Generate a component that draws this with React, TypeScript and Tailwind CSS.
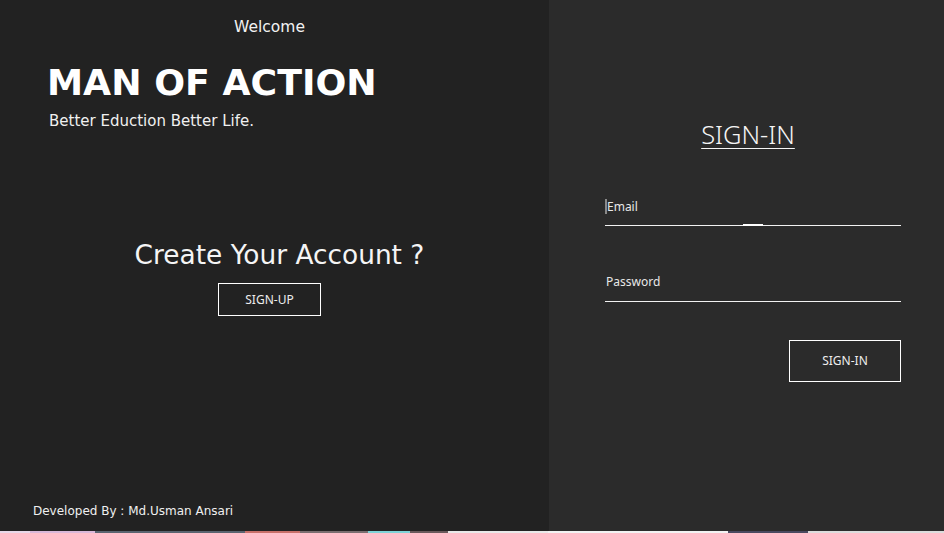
export default function App() {
  return (
    <div className="flex h-[533px] w-[944px] flex-col overflow-hidden bg-[#222222]">
      <div className="flex h-[531px] w-full">
        {/* left side */}
        <div className="relative flex w-[549px] flex-col bg-[#222222] font-['DejaVu_Sans',sans-serif] text-white">
          <p className="pt-[16px] pr-[10px] text-center text-[15.5px] leading-[22px] text-[#f2f2f2]">Welcome</p>
          <h1 className="mt-[23px] pl-[47px] text-[36.3px] font-bold leading-[44px]">MAN OF ACTION</h1>
          <p className="mt-[6px] pl-[49px] text-[15px] leading-[20px] text-[#f0f0f0]">Better Eduction Better Life.</p>

          <div className="mt-[108px] flex flex-col items-center pl-[10px]">
            <h2 className="text-[26.4px] leading-[32px] text-[#f5f5f5]">Create Your Account ?</h2>
            <button className="mt-[12px] mr-[20px] h-[33px] w-[103px] border border-white font-['Noto_Sans',sans-serif] text-[12px] text-[#eeeeee]">
              SIGN-UP
            </button>
          </div>

          <p className="mt-auto pb-[12px] pl-[33px] text-[12px] leading-[16px] text-[#f0f0f0]">
            Developed By : Md.Usman Ansari
          </p>
        </div>

        {/* right side */}
        <div className="flex flex-1 flex-col bg-[#2b2b2b] pl-[56px] pr-[43px] font-['Noto_Sans',sans-serif] text-white">
          <div className="mt-[117px] mr-[10px] flex justify-center">
            <h2 className="text-[25.5px] font-light leading-[34px] text-[#f5f5f5] underline decoration-1 underline-offset-[4px]">SIGN-IN</h2>
          </div>

          <div className="relative mt-[47px] flex h-[28px] items-start border-b border-[#f2f2f2]">
            <span className="mt-[1px] h-[15px] w-[2px] bg-[#8a8a8a]" />
            <span className="text-[12px] leading-[17px] text-[#e8e8e8]">Email</span>
            <span className="absolute bottom-[-1px] left-[138px] h-[2px] w-[20px] bg-white" />
          </div>

          <div className="mt-[47px] flex h-[29px] items-start border-b border-[#f2f2f2] pl-[1px]">
            <span className="text-[12px] leading-[17px] text-[#e8e8e8]">Password</span>
          </div>

          <div className="mt-[38px] flex justify-end">
            <button className="h-[42px] w-[112px] border border-white text-[12px] text-[#eeeeee]">SIGN-IN</button>
          </div>
        </div>
      </div>
      <div className="flex h-[2px] w-full">
        <div className="w-[30px] bg-[#e8d8e8]" />
        <div className="w-[65px] bg-[#d9b8d9]" />
        <div className="w-[150px] bg-[#5a6470]" />
        <div className="w-[55px] bg-[#c9706a]" />
        <div className="w-[68px] bg-[#7a6e70]" />
        <div className="w-[42px] bg-[#7fd3d8]" />
        <div className="w-[38px] bg-[#6a5a5c]" />
        <div className="w-[100px] bg-[#e9e9e9]" />
        <div className="w-[180px] bg-[#f2f2f2]" />
        <div className="w-[80px] bg-[#4a4a60]" />
        <div className="flex-1 bg-[#dcdcdc]" />
      </div>
    </div>
  );
}
